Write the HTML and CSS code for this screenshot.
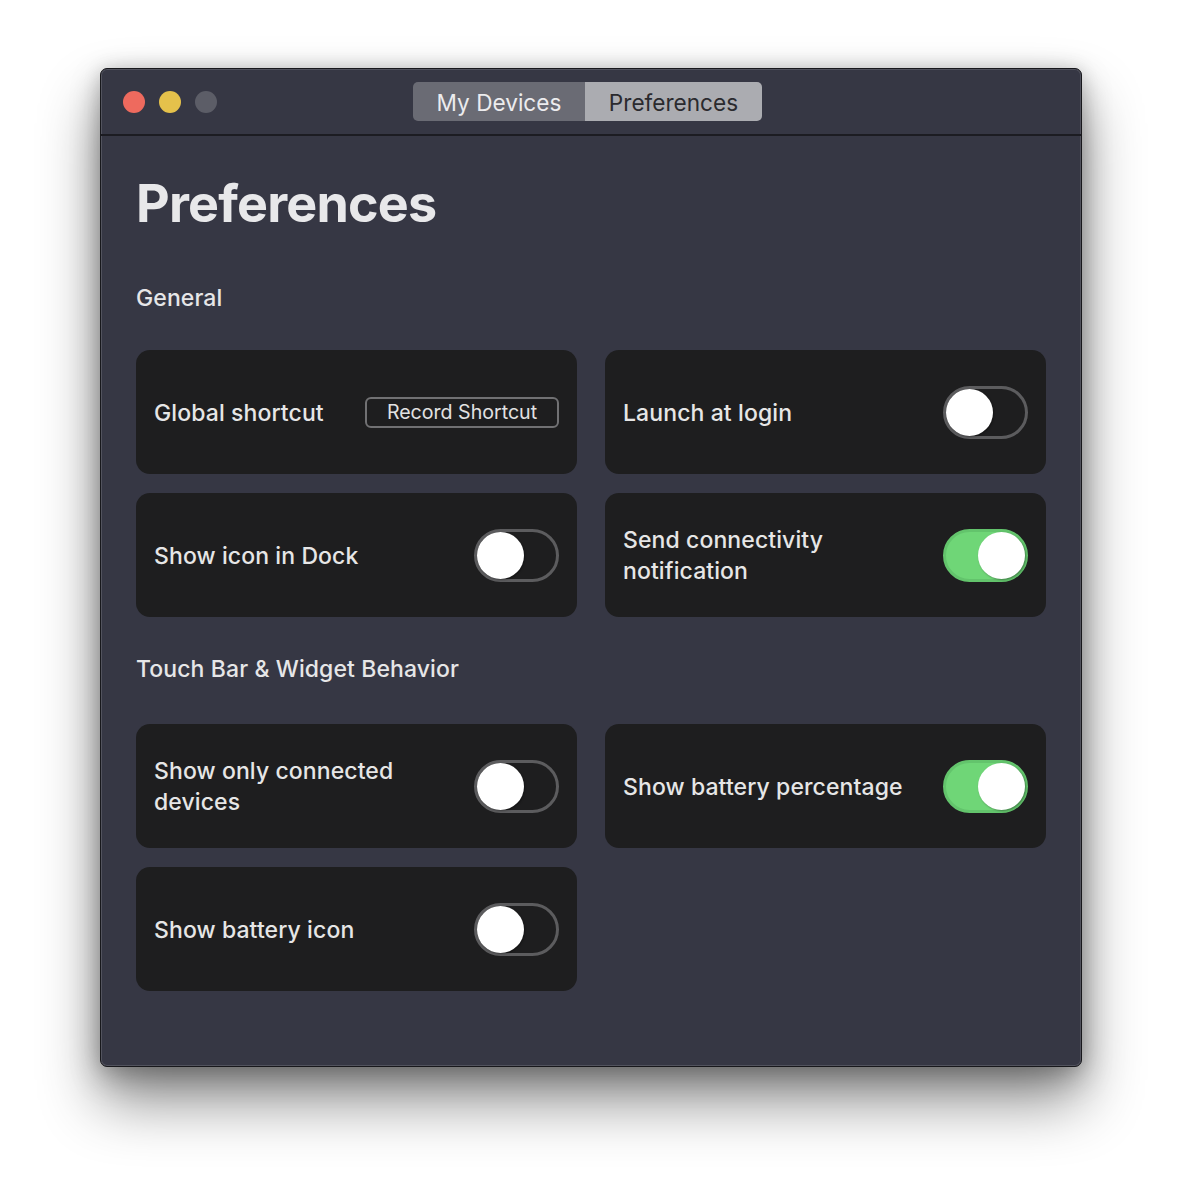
FILE: index.html
```html
<!DOCTYPE html>
<html lang="en">
<head>
<meta charset="utf-8">
<title>Preferences</title>
<link rel="stylesheet" href="styles.css">
</head>
<body>
<div class="desktop">
  <div class="window">
    <div class="titlebar">
      <div class="lights">
        <span class="light light--close"></span>
        <span class="light light--min"></span>
        <span class="light light--max"></span>
      </div>
      <div class="segmented">
        <span class="seg seg--off">My Devices</span>
        <span class="seg seg--on">Preferences</span>
      </div>
    </div>
    <div class="content">
      <h1 class="page-title">Preferences</h1>

      <h2 class="section-title">General</h2>
      <div class="grid">
        <div class="card">
          <span class="label">Global shortcut</span>
          <span class="record-btn">Record Shortcut</span>
        </div>
        <div class="card">
          <span class="label">Launch at login</span>
          <span class="toggle"><span class="knob"></span></span>
        </div>
        <div class="card">
          <span class="label">Show icon in Dock</span>
          <span class="toggle"><span class="knob"></span></span>
        </div>
        <div class="card">
          <span class="label">Send connectivity notification</span>
          <span class="toggle toggle--on"><span class="knob"></span></span>
        </div>
      </div>

      <h2 class="section-title section-title--second">Touch Bar &amp; Widget Behavior</h2>
      <div class="grid grid--second">
        <div class="card">
          <span class="label">Show only connected devices</span>
          <span class="toggle"><span class="knob"></span></span>
        </div>
        <div class="card">
          <span class="label">Show battery percentage</span>
          <span class="toggle toggle--on"><span class="knob"></span></span>
        </div>
        <div class="card">
          <span class="label">Show battery icon</span>
          <span class="toggle"><span class="knob"></span></span>
        </div>
      </div>
    </div>
  </div>
</div>
</body>
</html>
```

FILE: styles.css
```css
* { box-sizing: border-box; }

html, body {
  margin: 0;
  padding: 0;
  background: #ffffff;
  font-family: "Inter", "Noto Sans", sans-serif;
}

.desktop {
  padding: 68px 100px 0 100px;
  height: 1200px;
}

.window {
  width: 982px;
  height: 999px;
  background: #363744;
  border: 1px solid #18181c;
  border-radius: 7px;
  box-shadow:
    inset 0 0 0 1px rgba(255, 255, 255, 0.14),
    0 34px 60px rgba(0, 0, 0, 0.45),
    0 10px 30px rgba(0, 0, 0, 0.25),
    0 0 18px rgba(0, 0, 0, 0.12);
  overflow: hidden;
}

.titlebar {
  height: 67px;
  border-bottom: 2px solid #1c1c22;
  display: flex;
  align-items: center;
  padding-left: 22px;
}

.lights {
  display: flex;
  gap: 14px;
  align-items: center;
}

.light {
  width: 22px;
  height: 22px;
  border-radius: 50%;
  display: block;
}
.light--close { background: #ee6a5e; }
.light--min { background: #e5c14b; }
.light--max { background: #5c5d67; }

.segmented {
  margin-left: 196px;
  display: flex;
  height: 39px;
  border-radius: 5px;
  overflow: hidden;
}

.seg {
  display: flex;
  align-items: center;
  justify-content: center;
  font-size: 22.6px;
  font-weight: 400;
  letter-spacing: 0;
  padding-top: 1px;
}
.seg--off {
  width: 172px;
  background: #6a6b74;
  color: #ececee;
}
.seg--on {
  width: 177px;
  background: #abacb1;
  color: #2a2a2e;
}

.content {
  padding: 38px 35px 0 35px;
}

.page-title {
  margin: 0;
  font-size: 52px;
  line-height: 60px;
  font-weight: 700;
  color: #e8e8ea;
  letter-spacing: -0.8px;
}

.section-title {
  margin: 51px 0 39px 0;
  font-size: 23px;
  line-height: 26px;
  font-weight: 500;
  color: #e6e6e8;
  letter-spacing: 0.1px;
}
.section-title--second {
  margin: 39px 0 42px 0;
}

.grid {
  display: grid;
  grid-template-columns: 441px 441px;
  grid-auto-rows: 124px;
  column-gap: 28px;
  row-gap: 19px;
}

.card {
  background: #1e1e1f;
  border-radius: 14px;
  padding: 0 18px;
  display: flex;
  align-items: center;
  justify-content: space-between;
}

.label {
  font-size: 23px;
  line-height: 31px;
  font-weight: 500;
  color: #e6e6e6;
  max-width: 290px;
  letter-spacing: 0.1px;
  padding-top: 2px;
}

.record-btn {
  width: 194px;
  height: 31px;
  border: 2px solid #717173;
  border-radius: 6px;
  display: flex;
  align-items: center;
  justify-content: center;
  font-size: 19.6px;
  font-weight: 400;
  color: #e2e2e2;
  letter-spacing: 0;
}

.toggle {
  width: 85px;
  height: 53px;
  border-radius: 27px;
  border: 3px solid #5c5c5e;
  background: #1e1e1f;
  display: flex;
  align-items: center;
  flex-shrink: 0;
}

.knob {
  width: 47px;
  height: 47px;
  border-radius: 50%;
  background: #ffffff;
  display: block;
  box-shadow: 1px 1px 2px rgba(0, 0, 0, 0.35);
}

.toggle--on {
  background: #6fd677;
  border-color: #63c46c;
  justify-content: flex-end;
}
```
